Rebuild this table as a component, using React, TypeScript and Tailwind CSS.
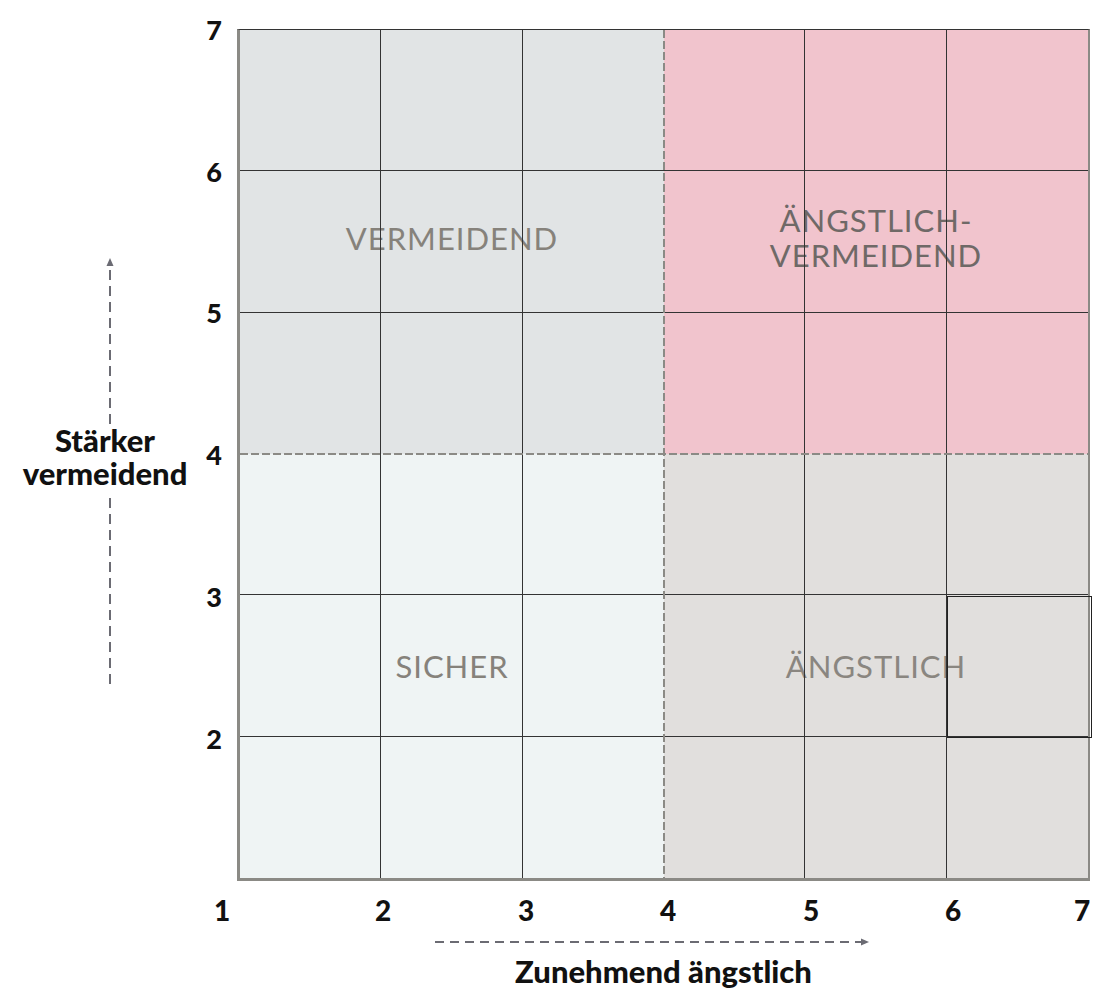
import React from "react";

const yTicks = [
  { label: "7", top: 0 },
  { label: "6", top: 142 },
  { label: "5", top: 283 },
  { label: "4", top: 425 },
  { label: "3", top: 567 },
  { label: "2", top: 709 },
];

const xTicks = [
  { label: "1", left: 222 },
  { label: "2", left: 383 },
  { label: "3", left: 526 },
  { label: "4", left: 668 },
  { label: "5", left: 811 },
  { label: "6", left: 953 },
  { label: "7", left: 1082 },
];

function Cells() {
  return (
    <div className="absolute inset-0 grid grid-cols-3 grid-rows-3">
      {Array.from({ length: 9 }, (_, i) => (
        <div
          key={i}
          className={`${i % 3 !== 2 ? "border-r" : ""} ${i < 6 ? "border-b" : ""} border-[#333]`}
        />
      ))}
    </div>
  );
}

function Quadrant({ bg, color, children }: { bg: string; color: string; children: React.ReactNode }) {
  return (
    <div className={`relative ${bg}`}>
      <div className={`absolute inset-0 flex items-center justify-center text-center text-[31px] leading-[35px] tracking-[1px] ${color}`}>
        {children}
      </div>
      <Cells />
    </div>
  );
}

export default function App() {
  return (
    <div className="w-[1116px] h-[1008px] bg-white font-['Lato','Noto_Sans',sans-serif] grid grid-cols-[237px_853px_1fr] grid-rows-[29px_852px_1fr]">
      <div className="col-span-3" />

      {/* y axis */}
      <div className="relative">
        <div className="flex flex-col items-center w-[220px] pt-[229px]">
          <svg width="12" height="166" viewBox="0 0 12 166">
            <polygon points="6,0 2.5,8 9.5,8" fill="#6b6b73" />
            <line x1="6" y1="12" x2="6" y2="166" stroke="#6b6b73" strokeWidth="2" strokeDasharray="10 6" />
          </svg>
          <div className="pr-[10px] text-center text-[31px] leading-[33px] font-black text-[#111]">
            Stärker
            <br />
            vermeidend
          </div>
          <svg width="12" height="200" viewBox="0 0 12 200">
            <line x1="6" y1="8" x2="6" y2="200" stroke="#6b6b73" strokeWidth="2" strokeDasharray="10 6" />
          </svg>
        </div>
        {yTicks.map((t) => (
          <div
            key={t.label}
            className="absolute right-[15px] -translate-y-1/2 text-[27px] leading-none font-black text-[#111]"
            style={{ top: t.top }}
          >
            {t.label}
          </div>
        ))}
      </div>

      {/* plot */}
      <div className="relative border-l-[3px] border-l-[#8b8a85] border-b-[3px] border-b-[#8b8a85] border-r-2 border-r-[#8b8a85] border-t border-t-[#333]">
        <div className="grid grid-cols-2 grid-rows-2 h-full">
          <Quadrant bg="bg-[#e1e4e5]" color="text-[#86827b]">
            <span className="-mt-[8px]">VERMEIDEND</span>
          </Quadrant>
          <Quadrant bg="bg-[#f1c4cd]" color="text-[#6f6967]">
            <span className="-mt-[8px]">
              ÄNGSTLICH-
              <br />
              VERMEIDEND
            </span>
          </Quadrant>
          <Quadrant bg="bg-[#eff4f4]" color="text-[#86827b]">
            <span>SICHER</span>
          </Quadrant>
          <Quadrant bg="bg-[#e1dfdd]" color="text-[#8a8680]">
            <span>ÄNGSTLICH</span>
          </Quadrant>
        </div>
        <svg className="absolute inset-0 w-full h-full" width="848" height="848">
          <line x1="424" y1="0" x2="424" y2="848" stroke="#8b8a85" strokeWidth="2" strokeDasharray="8 3" />
          <line x1="0" y1="424" x2="848" y2="424" stroke="#8b8a85" strokeWidth="2" strokeDasharray="8 3" />
        </svg>
        <div className="absolute left-[707px] top-[566px] w-[145px] h-[142px] border border-[#222]" />
      </div>
      <div />

      {/* x axis */}
      <div className="col-span-3 relative">
        {xTicks.map((t) => (
          <div
            key={t.label}
            className="absolute top-[29px] -translate-x-1/2 -translate-y-1/2 text-[28px] leading-none font-black text-[#111]"
            style={{ left: t.left }}
          >
            {t.label}
          </div>
        ))}
        <div className="ml-[237px] w-[853px] flex flex-col items-center pt-[56px]">
          <svg className="-ml-[24px]" width="434" height="10" viewBox="0 0 434 10">
            <line x1="0" y1="5" x2="426" y2="5" stroke="#6b6b73" strokeWidth="2" strokeDasharray="9 6" />
            <polygon points="434,5 426,1.5 426,8.5" fill="#6b6b73" />
          </svg>
          <div className="mt-[8px] text-[31px] leading-[32px] font-black text-[#111]">Zunehmend ängstlich</div>
        </div>
      </div>
    </div>
  );
}
